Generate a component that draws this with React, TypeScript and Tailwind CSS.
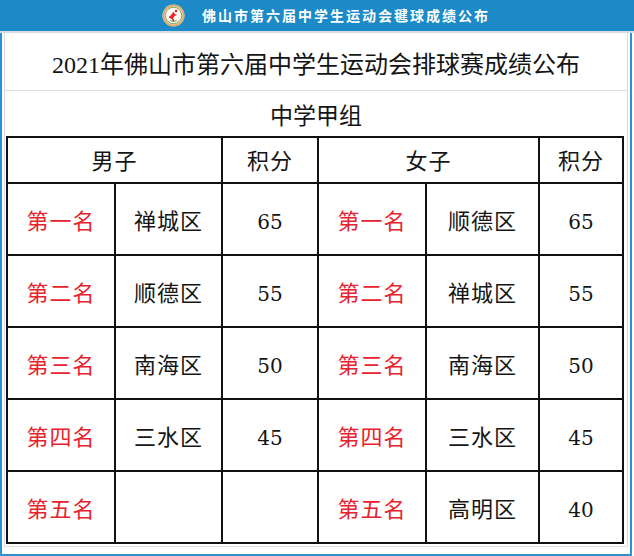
import React from 'react';

const serif = { fontFamily: '"Liberation Serif", "Noto Sans CJK SC", serif' };
const digits = { fontFamily: '"DejaVu Serif", "Liberation Serif", serif' };

const boys = [
    ['第一名', '禅城区', '65'],
    ['第二名', '顺德区', '55'],
    ['第三名', '南海区', '50'],
    ['第四名', '三水区', '45'],
    ['第五名', '', ''],
];

const girls = [
    ['第一名', '顺德区', '65'],
    ['第二名', '禅城区', '55'],
    ['第三名', '南海区', '50'],
    ['第四名', '三水区', '45'],
    ['第五名', '高明区', '40'],
];

function Logo() {
    return (
        <svg width="23" height="23" viewBox="0 0 24 24">
            <circle cx="12" cy="12" r="11.5" fill="#f3e6cf" />
            <circle cx="12" cy="12" r="10.5" fill="none" stroke="#e0a860" strokeWidth="1.6" />
            <circle cx="12" cy="12" r="8.6" fill="none" stroke="#4f9a4c" strokeWidth="0.8" />
            <circle cx="12" cy="12" r="7.6" fill="#fffaf2" />
            <path d="M7 13.5c2-1 3.5-3.5 5-5.5 1 1.5 1.2 3 3.8 3.2-1.6 1-3.2 1.2-4.3 3.6l1.8 3.2-1.6.4-2-3.3c-0.8 0.2-1.8-0.4-2.7-1.6z" fill="#e0262b" />
            <circle cx="14.6" cy="7.4" r="1.3" fill="#e0262b" />
            <path d="M8.5 17c1.5 1.3 4.8 1.6 7 .2" fill="none" stroke="#4f9a4c" strokeWidth="0.9" />
        </svg>
    );
}

function Cell({ children, red, num, span, head }: { children?: React.ReactNode; red?: boolean; num?: boolean; span?: boolean; head?: boolean }) {
    return (
        <div
            className={`flex items-center justify-center border-r-2 border-b-2 border-[#111] ${span ? 'col-span-2' : ''} ${
                red ? 'text-[#e8222c]' : 'text-[#151515]'
            } ${num ? 'text-[20px]' : 'text-[22px] tracking-[1px]'} ${head ? 'pt-[2px]' : 'pt-[5px]'}`}
            style={num ? digits : serif}
        >
            {children}
        </div>
    );
}

export default function App() {
    return (
        <div className="w-[634px] h-[556px] bg-white overflow-hidden">
            {/* top bar */}
            <div className="h-[31px] bg-[#1b8ac6] flex items-center justify-center pl-[18px] gap-[17px]">
                <Logo />
                <span
                    className="text-white text-[14px] font-bold tracking-[2px]"
                    style={{ fontFamily: '"Noto Sans CJK SC", sans-serif' }}
                >
                    佛山市第六届中学生运动会毽球成绩公布
                </span>
            </div>
            <div className="h-[2px] bg-[#d6dde5]" />

            <div className="w-[632px] h-[523px] border-x-2 border-b-2 border-[#2c90d2]">
                <div className="ml-[2px] w-[624px] border-x border-b border-[#dadde2] pb-[2px]">
                    <div className="h-[58px] border-b border-[#dadde2] flex items-center justify-center">
                        <span className="text-[24px] text-[#141414] pt-[6px]" style={serif}>
                            2021年佛山市第六届中学生运动会排球赛成绩公布
                        </span>
                    </div>
                    <div className="h-[45px] flex items-center justify-center">
                        <span className="text-[23px] text-[#141414] pt-[7px]" style={serif}>
                            中学甲组
                        </span>
                    </div>

                    <div className="ml-[1px] grid grid-cols-[108px_107px_96px_108px_113px_84px] grid-rows-[46px_repeat(5,72px)] border-t-2 border-l-2 border-[#111] w-[618px]">
                        <Cell span head>男子</Cell>
                        <Cell head>积分</Cell>
                        <Cell span head>女子</Cell>
                        <Cell head>积分</Cell>
                        {boys.map((b, i) => (
                            <React.Fragment key={i}>
                                <Cell red>{b[0]}</Cell>
                                <Cell>{b[1]}</Cell>
                                <Cell num>{b[2]}</Cell>
                                <Cell red>{girls[i][0]}</Cell>
                                <Cell>{girls[i][1]}</Cell>
                                <Cell num>{girls[i][2]}</Cell>
                            </React.Fragment>
                        ))}
                    </div>
                </div>
            </div>
        </div>
    );
}
